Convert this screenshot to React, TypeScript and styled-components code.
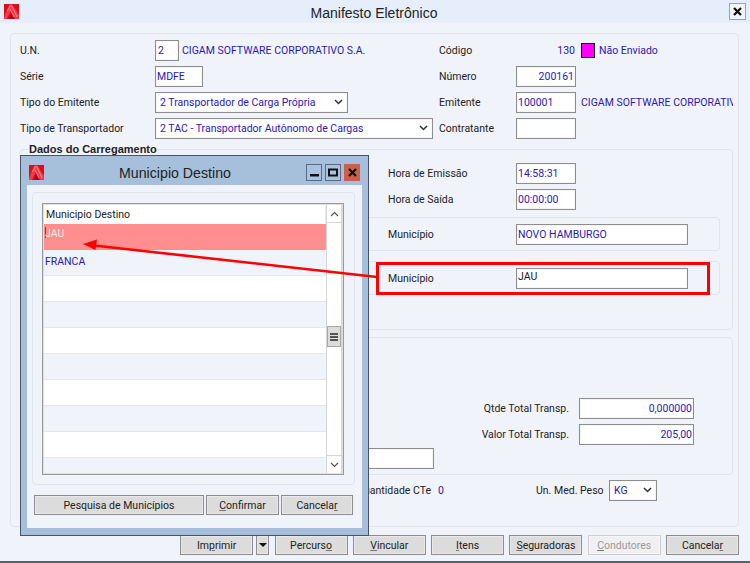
import { FC, ReactNode } from 'react';
import styled, { createGlobalStyle } from 'styled-components';

const GlobalStyle = createGlobalStyle`
	html, body {
		margin: 0;
		padding: 0;
		background: #f1f3fa;
	}
	* {
		box-sizing: border-box;
	}
`;

const FONT = 'Roboto, "Liberation Sans", Arial, sans-serif';
const TITLE_FONT = '"Liberation Sans", Arial, sans-serif';
const BLUE = '#2b18b4';

const Screen = styled.div`
	position: relative;
	width: 750px;
	height: 563px;
	overflow: hidden;
	background: #f1f3fa;
	border-bottom: 2px solid #59616e;
	font: 10.5px ${FONT};
	color: #222;
`;

const TitleBar = styled.div`
	display: flex;
	align-items: center;
	height: 23px;
	padding: 0 4px 0 4px;
	background: #e6eefc;
`;

const WindowTitle = styled.div`
	flex: 1;
	padding-top: 2px;
	text-align: center;
	font: 14px ${TITLE_FONT};
	color: #222;
`;

const CloseButton = styled.div`
	display: flex;
	align-items: center;
	justify-content: center;
	width: 17px;
	height: 17px;
	background: #f0f4fc;
	border: 1px solid #9aa3b2;
`;

const Panel = styled.div`
	height: 494px;
	margin: 10px 11px 0 10px;
	padding: 3px 5px 0 9px;
	border: 1px solid #e0e4ee;
	border-radius: 4px;
`;

const FormGrid = styled.div`
	display: grid;
	grid-template-columns: 135px 284px 77px minmax(0, 1fr);
	grid-auto-rows: 26px;
	align-items: center;
`;

const Label = styled.span<{ $right?: boolean }>`
	white-space: nowrap;
	text-align: ${p => (p.$right ? 'right' : 'left')};
`;

const Inline = styled.div`
	display: flex;
	align-items: center;
	min-width: 0;
	overflow: hidden;
	white-space: nowrap;
`;

const ValueText = styled.span<{ $gap?: number }>`
	color: ${BLUE};
	margin-left: ${p => p.$gap ?? 0}px;
`;

const CodeValue = styled.span`
	width: 59px;
	flex: none;
	text-align: right;
	color: ${BLUE};
`;

const StatusSwatch = styled.span`
	flex: none;
	width: 14px;
	height: 15px;
	margin-left: 6px;
	background: #ff00ff;
	border: 1px solid #111;
`;

const Input = styled.div<{ $w: number; $right?: boolean; $black?: boolean; $top?: boolean }>`
	display: flex;
	align-items: ${p => (p.$top ? 'flex-start' : 'center')};
	justify-content: ${p => (p.$right ? 'flex-end' : 'flex-start')};
	flex: none;
	width: ${p => p.$w}px;
	height: 21px;
	padding: ${p => (p.$top ? '1px' : '0')} 1px 0 1px;
	background: #fff;
	border: 1px solid #8d8d8d;
	box-shadow: inset 0 0 0 1px #f6f6f6;
	color: ${p => (p.$black ? '#222' : BLUE)};
	white-space: nowrap;
`;

const SelectBox = styled(Input)`
	justify-content: space-between;
	padding: 0 4px 0 4px;
`;

const Chevron: FC = () => (
	<svg width="9" height="6" viewBox="0 0 9 6">
		<polyline points="1,1 4.5,4.5 8,1" fill="none" stroke="#333" strokeWidth="1.5" />
	</svg>
);

const Select: FC<{ w: number; children: ReactNode }> = ({ w, children }) => (
	<SelectBox $w={w}>
		{children}
		<Chevron />
	</SelectBox>
);

const Group = styled.div<{ $h: number; $top: number }>`
	position: relative;
	height: ${p => p.$h}px;
	margin-top: ${p => p.$top}px;
	border: 1px solid #e0e4ee;
	border-radius: 4px;
`;

const Legend = styled.div`
	position: absolute;
	top: -7px;
	left: 7px;
	padding: 0 1px;
	background: #f1f3fa;
	font: bold 11px ${TITLE_FONT};
`;

const CargoFields = styled.div`
	padding: 10px 0 0 367px;
`;

const FieldRow = styled.div`
	display: flex;
	align-items: center;
	height: 26px;
`;

const FieldLabel = styled.span`
	width: 128px;
	flex: none;
`;

const CityBox = styled.div<{ $top: number }>`
	display: flex;
	align-items: center;
	height: 34px;
	margin: ${p => p.$top}px 12px 0 10px;
	padding-left: 356px;
	border: 1px solid #e0e4ee;
	border-radius: 4px;
`;

const TotalsGroup = styled(Group)`
	display: flex;
	flex-direction: column;
	align-items: flex-end;
	padding: 57px 38px 0 0;
`;

const TotalRow = styled.div`
	display: flex;
	align-items: center;
	gap: 10px;
	height: 26px;
`;

const FreeInput = styled(Input)`
	align-self: flex-start;
	margin: 1px 0 0 279px;
`;

const SummaryRow = styled.div`
	display: grid;
	grid-template-columns: 411px 105px 73px 48px;
	align-items: center;
	height: 26px;
	margin-top: 2px;
`;

const ButtonBar = styled.div`
	display: flex;
	justify-content: flex-end;
	gap: 5.3px;
	margin-top: 8px;
	padding-right: 11px;
`;

const Button = styled.div<{ $w: number; $disabled?: boolean }>`
	display: flex;
	align-items: center;
	justify-content: center;
	flex: none;
	width: ${p => p.$w}px;
	height: 20px;
	background: ${p => (p.$disabled ? '#f0f0f2' : '#dcdcdc')};
	border: 1px solid ${p => (p.$disabled ? '#cfcfcf' : '#8c8c8c')};
	box-shadow: inset 0 0 0 1px ${p => (p.$disabled ? '#f6f6f6' : '#e9e9e9')};
	color: ${p => (p.$disabled ? '#9a9a9a' : '#222')};
	u {
		text-underline-offset: 1px;
		text-decoration-thickness: 1px;
		text-decoration-color: #777;
	}
`;

const SplitButton = styled.div`
	display: flex;
	gap: 3px;
`;

const DropArrow = styled.span`
	width: 0;
	height: 0;
	border-left: 4px solid transparent;
	border-right: 4px solid transparent;
	border-top: 4px solid #111;
`;

const Dialog = styled.div`
	position: absolute;
	left: 20px;
	top: 155px;
	width: 349px;
	height: 381px;
	display: flex;
	flex-direction: column;
	padding: 0 6px 7px 6px;
	background: #a6c0dc;
	border: 1px solid #46546a;
`;

const DialogHeader = styled.div`
	display: flex;
	align-items: center;
	height: 29px;
	flex: none;
	padding: 4px 2px 0 2px;
`;

const DialogTitle = styled.div`
	flex: 1;
	text-align: center;
	font: 14.2px ${TITLE_FONT};
	color: #222;
`;

const DialogControls = styled.div`
	display: flex;
	gap: 3px;
`;

const ControlButton = styled.div<{ $close?: boolean }>`
	display: flex;
	align-items: center;
	justify-content: center;
	width: 16px;
	height: 17px;
	background: ${p => (p.$close ? '#c8604a' : '#a9c3df')};
	border: 1px solid ${p => (p.$close ? '#c8604a' : '#5a6a80')};
`;

const DialogBody = styled.div`
	flex: 1;
	padding: 7px 7px 0 5px;
	background: #f1f3fa;
`;

const DialogGroup = styled.div`
	height: 293px;
	padding: 10px 10px 0 9px;
	border: 1px solid #e0e4ee;
	border-radius: 4px;
`;

const DataGrid = styled.div`
	display: flex;
	height: 272px;
	padding: 1px;
	background: #fff;
	border: 1px solid #9b9b9b;
	box-shadow: inset 0 0 0 1px #dedede;
`;

const GridRows = styled.div`
	flex: 1;
	min-width: 0;
	overflow: hidden;
	padding-top: 1px;
`;

const GridHeader = styled.div`
	display: flex;
	align-items: center;
	height: 18px;
	padding: 0 0 1px 2px;
	background: #fff;
	border-right: 1px solid #e8e8e8;
`;

const GridRow = styled.div<{ $selected?: boolean; $alt?: boolean }>`
	display: flex;
	align-items: ${p => (p.$selected ? 'flex-start' : 'center')};
	height: 26px;
	padding: ${p => (p.$selected ? '3px' : '0')} 0 ${p => (p.$selected ? '0' : '2px')} 1px;
	background: ${p => (p.$selected ? '#ff8f8f' : p.$alt ? '#f1f3fa' : '#fff')};
	border-bottom: 1px solid ${p => (p.$selected ? '#ff8f8f' : '#e6e7ee')};
	color: ${p => (p.$selected ? '#e9e9e9' : BLUE)};
`;

const Caret = styled.span`
	width: 1px;
	height: 11px;
	margin-right: -1px;
	background: #555;
`;

const ScrollBar = styled.div`
	display: flex;
	flex-direction: column;
	flex: none;
	width: 16px;
	background: #fff;
	border-left: 1px solid #d6d6d6;
	border-right: 1px solid #d6d6d6;
`;

const ScrollArrow = styled.div<{ $bottom?: boolean }>`
	display: flex;
	align-items: center;
	justify-content: center;
	height: 18px;
	margin-top: ${p => (p.$bottom ? 'auto' : '0')};
	border-top: ${p => (p.$bottom ? '1px solid #d6d6d6' : 'none')};
	border-bottom: ${p => (p.$bottom ? 'none' : '1px solid #d6d6d6')};
`;

const ScrollThumb = styled.div`
	display: flex;
	flex-direction: column;
	align-items: center;
	justify-content: center;
	gap: 1px;
	height: 21px;
	margin-top: 103px;
	background: #dcdcdc;
	border: 1px solid #a8a8a8;
	i {
		width: 8px;
		height: 2px;
		background: #555;
	}
`;

const DialogButtons = styled.div`
	display: flex;
	gap: 2px;
	margin: 10px 0 0 2px;
`;

const Callout = styled.div`
	position: absolute;
	left: 376px;
	top: 262px;
	width: 334px;
	height: 33px;
	border: 3px solid #f00;
`;

const ArrowOverlay = styled.svg`
	position: absolute;
	left: 0;
	top: 0;
	pointer-events: none;
`;

const CompanyIcon: FC = () => (
	<svg width="15" height="15" viewBox="0 0 15 15">
		<rect width="15" height="15" fill="#dc0c18" />
		<path d="M0 13 L5 1 L8 0 L15 11 L15 15 L11 15 L7 6 L3 15 L0 15 Z" fill="#ee3c4a" />
		<path d="M5 15 L7.5 8.5 L10 15 Z" fill="#a90a14" />
		<path d="M5 2 L8 2 L13 13 M3 7 L6 3 M6 5 L10 13" fill="none" stroke="#f98a92" strokeWidth="0.9" />
	</svg>
);

const CloseGlyph: FC<{ size?: number }> = ({ size = 9 }) => (
	<svg width={size} height={size} viewBox="0 0 9 9">
		<path d="M1 1 L8 8 M8 1 L1 8" stroke="#111" strokeWidth="2.2" />
	</svg>
);

const rowShades = [false, true, false, true, false, true, false, true, false];

export const App: FC = () => {
	return (
		<Screen>
			<GlobalStyle />
			<TitleBar>
				<CompanyIcon />
				<WindowTitle>Manifesto Eletrônico</WindowTitle>
				<CloseButton>
					<CloseGlyph />
				</CloseButton>
			</TitleBar>

			<Panel>
				<FormGrid>
					<Label>U.N.</Label>
					<Inline>
						<Input $w={24}><ValueText $gap={1}>2</ValueText></Input>
						<ValueText $gap={3}>CIGAM SOFTWARE CORPORATIVO S.A.</ValueText>
					</Inline>
					<Label>Código</Label>
					<Inline>
						<CodeValue>130</CodeValue>
						<StatusSwatch />
						<ValueText $gap={4}>Não Enviado</ValueText>
					</Inline>

					<Label>Série</Label>
					<Input $w={48}>MDFE</Input>
					<Label>Número</Label>
					<Input $w={60} $right>200161</Input>

					<Label>Tipo do Emitente</Label>
					<Select w={193}>2 Transportador de Carga Própria</Select>
					<Label>Emitente</Label>
					<Inline>
						<Input $w={60}>100001</Input>
						<ValueText $gap={5}>CIGAM SOFTWARE CORPORATIVO S.A.</ValueText>
					</Inline>

					<Label>Tipo de Transportador</Label>
					<Select w={278}>2 TAC - Transportador Autônomo de Cargas</Select>
					<Label>Contratante</Label>
					<Input $w={60} />
				</FormGrid>

				<Group $h={181} $top={8}>
					<Legend>Dados do Carregamento</Legend>
					<CargoFields>
						<FieldRow>
							<FieldLabel>Hora de Emissão</FieldLabel>
							<Input $w={60}>14:58:31</Input>
						</FieldRow>
						<FieldRow>
							<FieldLabel>Hora de Saída</FieldLabel>
							<Input $w={60}>00:00:00</Input>
						</FieldRow>
					</CargoFields>
					<CityBox $top={5}>
						<FieldLabel>Município</FieldLabel>
						<Input $w={172}>NOVO HAMBURGO</Input>
					</CityBox>
					<CityBox $top={10}>
						<FieldLabel>Município</FieldLabel>
						<Input $w={172} $black $top>JAU</Input>
					</CityBox>
				</Group>

				<TotalsGroup $h={138} $top={7}>
					<TotalRow>
						<Label $right>Qtde Total Transp.</Label>
						<Input $w={115} $right>0,000000</Input>
					</TotalRow>
					<TotalRow>
						<Label $right>Valor Total Transp.</Label>
						<Input $w={115} $right>205,00</Input>
					</TotalRow>
					<FreeInput $w={134} />
				</TotalsGroup>

				<SummaryRow>
					<Label $right>Quantidade CTe</Label>
					<ValueText $gap={7}>0</ValueText>
					<Label>Un. Med. Peso</Label>
					<Select w={48}>KG</Select>
				</SummaryRow>
			</Panel>

			<ButtonBar>
				<SplitButton>
					<Button $w={73}><span>Im<u>p</u>rimir</span></Button>
					<Button $w={13}><DropArrow /></Button>
				</SplitButton>
				<Button $w={73}><span>Percurs<u>o</u></span></Button>
				<Button $w={73}><span><u>V</u>incular</span></Button>
				<Button $w={73}><span><u>I</u>tens</span></Button>
				<Button $w={73}><span><u>S</u>eguradoras</span></Button>
				<Button $w={73} $disabled><span><u>C</u>ondutores</span></Button>
				<Button $w={73}><span>Cancela<u>r</u></span></Button>
			</ButtonBar>

			<Dialog>
				<DialogHeader>
					<CompanyIcon />
					<DialogTitle>Municipio Destino</DialogTitle>
					<DialogControls>
						<ControlButton>
							<svg width="9" height="9" viewBox="0 0 9 9"><rect x="0" y="6" width="9" height="2.5" fill="#111" /></svg>
						</ControlButton>
						<ControlButton>
							<svg width="10" height="9" viewBox="0 0 10 9"><rect x="1" y="1.5" width="8" height="6" fill="none" stroke="#111" strokeWidth="2" /></svg>
						</ControlButton>
						<ControlButton $close>
							<CloseGlyph />
						</ControlButton>
					</DialogControls>
				</DialogHeader>
				<DialogBody>
					<DialogGroup>
						<DataGrid>
							<GridRows>
								<GridHeader>Municipio Destino</GridHeader>
								<GridRow $selected><Caret />JAU</GridRow>
								<GridRow $alt>FRANCA</GridRow>
								{rowShades.map((alt, index) => (
									<GridRow key={index} $alt={alt} />
								))}
							</GridRows>
							<ScrollBar>
								<ScrollArrow>
									<svg width="9" height="6" viewBox="0 0 9 6"><polyline points="1,5 4.5,1.5 8,5" fill="none" stroke="#555" strokeWidth="1.2" /></svg>
								</ScrollArrow>
								<ScrollThumb><i /><i /><i /></ScrollThumb>
								<ScrollArrow $bottom>
									<svg width="9" height="6" viewBox="0 0 9 6"><polyline points="1,1 4.5,4.5 8,1" fill="none" stroke="#555" strokeWidth="1.2" /></svg>
								</ScrollArrow>
							</ScrollBar>
						</DataGrid>
					</DialogGroup>
					<DialogButtons>
						<Button $w={170}>Pesquisa de Municípios</Button>
						<Button $w={73}><span><u>C</u>onfirmar</span></Button>
						<Button $w={72}><span>Cancela<u>r</u></span></Button>
					</DialogButtons>
				</DialogBody>
			</Dialog>

			<Callout />
			<ArrowOverlay width="750" height="563" viewBox="0 0 750 563">
				<line x1="377" y1="277" x2="94" y2="245.5" stroke="#f00" strokeWidth="2.6" />
				<polygon points="83,244 97,239.5 95.5,250" fill="#f00" />
			</ArrowOverlay>
		</Screen>
	);
};

export default App;
